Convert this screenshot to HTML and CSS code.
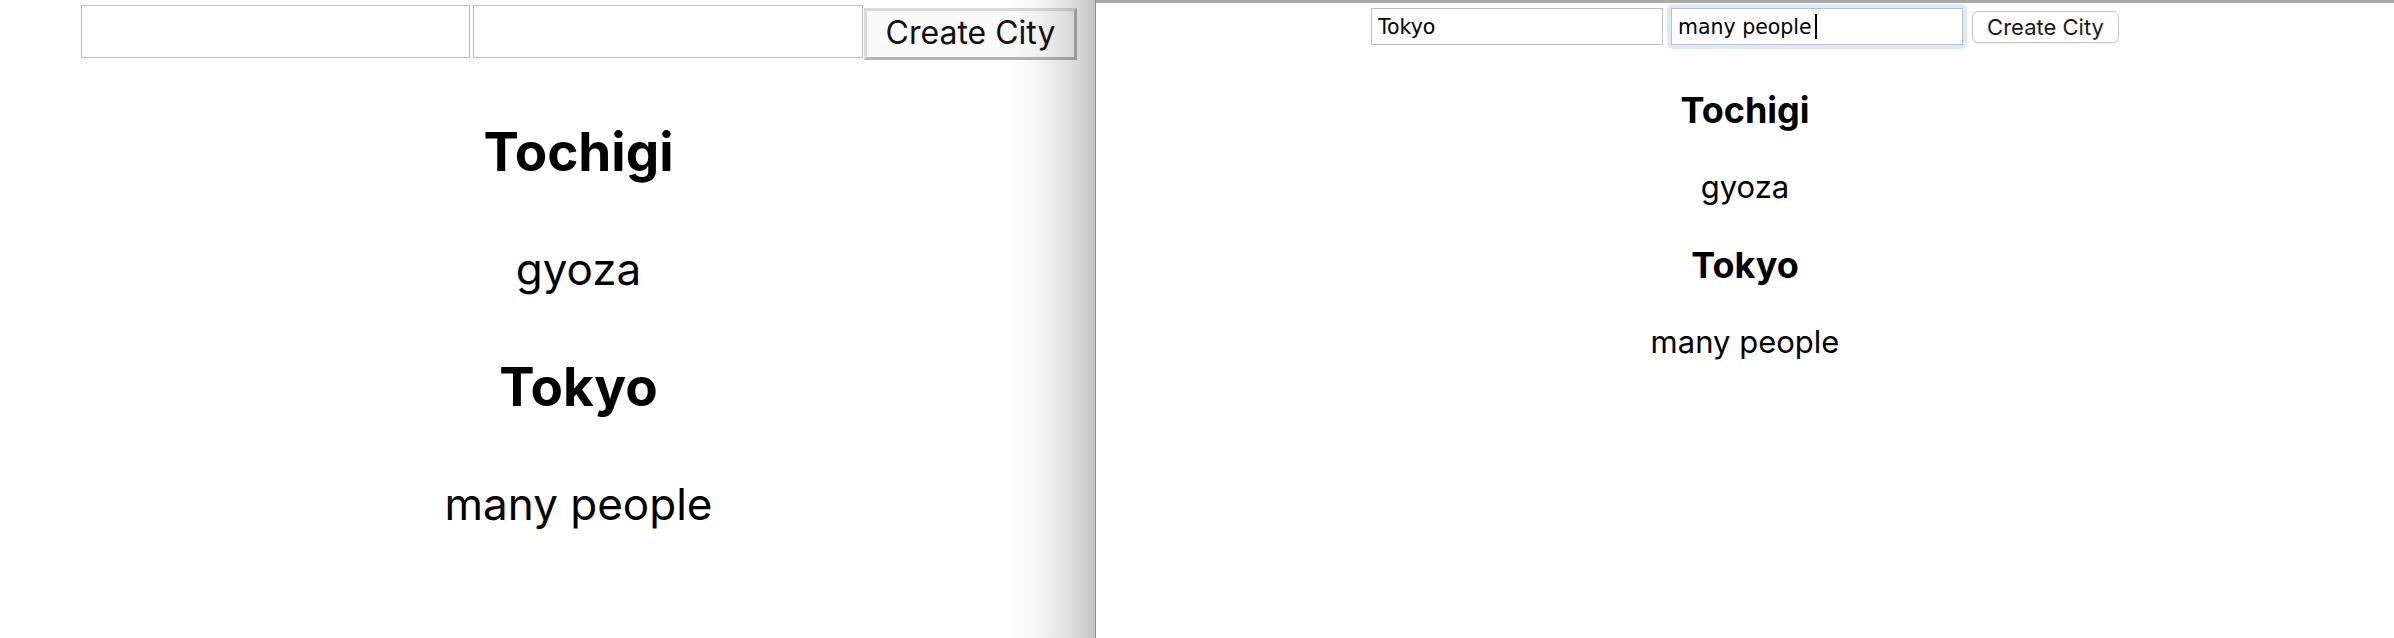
FILE: index.html
```html
<!DOCTYPE html>
<html lang="en">
<head>
<meta charset="utf-8">
<title>Cities</title>
<link rel="stylesheet" href="styles.css">
</head>
<body>
<div class="screen">
  <section class="pane pane-left">
    <div class="left-inner">
      <form class="form-left">
        <input class="field-l" type="text">
        <input class="field-l field-l2" type="text">
        <button class="btn-l" type="button">Create City</button>
      </form>
      <div class="cities-l">
        <h3 class="name-l">Tochigi</h3>
        <p class="desc-l">gyoza</p>
        <h3 class="name-l">Tokyo</h3>
        <p class="desc-l">many people</p>
      </div>
    </div>
    <div class="shade"></div>
  </section>
  <div class="divider"></div>
  <section class="pane pane-right">
    <form class="form-right">
      <input class="field-r" type="text" value="Tokyo">
      <span class="focus-ring">
        <input class="field-r field-r2" type="text" value="many people">
        <span class="caret"></span>
      </span>
      <button class="btn-r" type="button">Create City</button>
    </form>
    <div class="cities-r">
      <h3 class="name-r">Tochigi</h3>
      <p class="desc-r">gyoza</p>
      <h3 class="name-r">Tokyo</h3>
      <p class="desc-r">many people</p>
    </div>
  </section>
</div>
</body>
</html>
```
FILE: styles.css
```css
* { box-sizing: border-box; }
html, body { margin: 0; padding: 0; background: #fff; }
body {
  width: 2394px;
  height: 638px;
  overflow: hidden;
  font-family: Inter, "Noto Sans", sans-serif;
  color: #000;
}
.screen { display: flex; height: 638px; }

/* ---------- left (zoomed) window ---------- */
.pane-left {
  position: relative;
  flex: none;
  width: 1095px;
  overflow: hidden;
}
.left-inner { width: 1157px; padding-top: 5px; }
.form-left { display: flex; align-items: flex-start; margin: 0 0 0 81px; }
.field-l {
  width: 389px;
  height: 53px;
  margin: 0;
  padding: 0;
  border: 1px solid #bdbdbd;
  background: #fff;
}
.field-l2 { width: 390px; margin-left: 3px; }
.btn-l {
  width: 213px;
  height: 52px;
  margin: 3px 0 0 1px;
  padding: 0 0 3px;
  border: 3px solid;
  border-color: #dadada #b5b5b5 #b5b5b5 #dadada;
  background: #fafafa;
  font-family: Inter, "Noto Sans", sans-serif;
  font-size: 32px;
  color: #111;
}
.cities-l { text-align: center; padding-top: 66px; }
.name-l {
  margin: 0 0 68px;
  font-size: 53px;
  line-height: 1;
  font-weight: 700;
}
.desc-l {
  margin: 0 0 70px;
  font-size: 44px;
  line-height: 1;
  font-weight: 400;
}
.shade {
  position: absolute;
  top: 0;
  right: 0;
  bottom: 0;
  width: 86px;
  background: linear-gradient(to right, rgba(0,0,0,0) 0%, rgba(0,0,0,0.04) 35%, rgba(0,0,0,0.12) 70%, rgba(0,0,0,0.23) 100%);
}
.divider { flex: none; width: 1px; background: #8e8e8e; }

/* ---------- right window ---------- */
.pane-right {
  flex: 1;
  border-top: 3px solid #a9a9a9;
  padding-top: 5px;
}
.form-right {
  display: flex;
  align-items: center;
  justify-content: center;
  margin: 0;
}
.field-r {
  width: 292px;
  height: 37px;
  margin: 0;
  padding: 0 0 0 6px;
  border: 1px solid #bfbfbf;
  background: #fff;
  font-family: "DejaVu Sans", sans-serif;
  font-size: 20.5px;
  color: #000;
  outline: none;
}
.focus-ring {
  position: relative;
  display: flex;
  margin: -4px 0 -4px 4px;
  padding: 4px;
  border-radius: 6px;
  background: #dce8fb;
}
.caret {
  position: absolute;
  left: 148px;
  top: 10px;
  width: 2px;
  height: 25px;
  background: #000;
}
.btn-r {
  width: 147px;
  height: 32px;
  margin-left: 5px;
  padding: 0;
  border: 1px solid #c4c4c4;
  border-radius: 6px;
  background: #fff;
  box-shadow: 0 1px 1px rgba(0,0,0,0.06);
  font-family: Inter, "Noto Sans", sans-serif;
  font-size: 22px;
  color: #1a1a1a;
}
.cities-r { text-align: center; padding-top: 47px; }
.name-r {
  margin: 0 0 43px;
  font-size: 36px;
  line-height: 1;
  font-weight: 700;
}
.desc-r {
  margin: 0 0 45px;
  font-size: 31px;
  line-height: 1;
  font-weight: 400;
}
```
